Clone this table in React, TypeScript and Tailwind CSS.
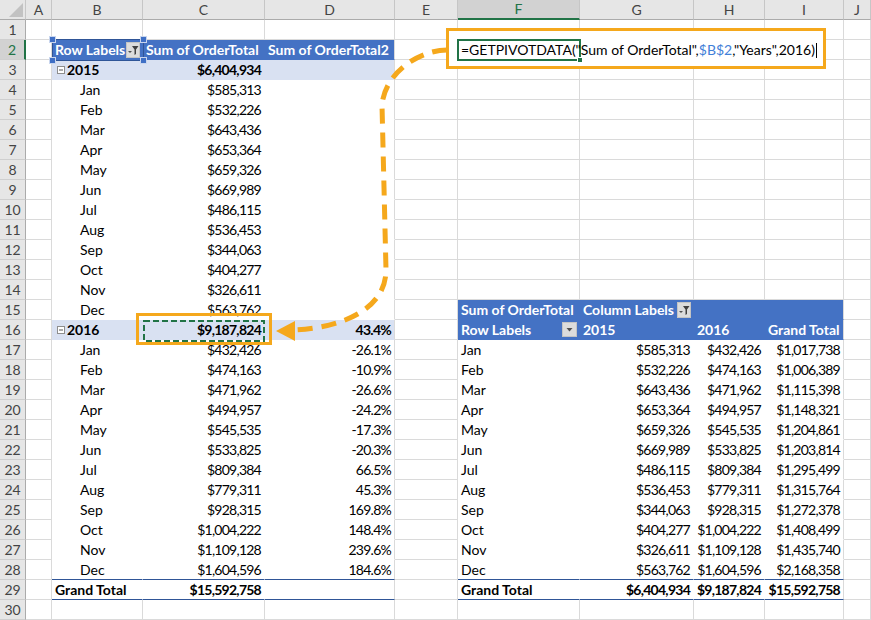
import React from "react";

const W = ["w-[26px]", "w-[26px]", "w-[91px]", "w-[122px]", "w-[130px]", "w-[63px]", "w-[122px]", "w-[114px]", "w-[71px]", "w-[79px]", "w-[27px]"];
const LET = ["", "A", "B", "C", "D", "E", "F", "G", "H", "I", "J"];
const MONTHS = ["Jan", "Feb", "Mar", "Apr", "May", "Jun", "Jul", "Aug", "Sep", "Oct", "Nov", "Dec"];
const V15 = ["$585,313", "$532,226", "$643,436", "$653,364", "$659,326", "$669,989", "$486,115", "$536,453", "$344,063", "$404,277", "$326,611", "$563,762"];
const V16 = ["$432,426", "$474,163", "$471,962", "$494,957", "$545,535", "$533,825", "$809,384", "$779,311", "$928,315", "$1,004,222", "$1,109,128", "$1,604,596"];
const PCT = ["-26.1%", "-10.9%", "-26.6%", "-24.2%", "-17.3%", "-20.3%", "66.5%", "45.3%", "169.8%", "148.4%", "239.6%", "184.6%"];
const TOT = ["$1,017,738", "$1,006,389", "$1,115,398", "$1,148,321", "$1,204,861", "$1,203,814", "$1,295,499", "$1,315,764", "$1,272,378", "$1,408,499", "$1,435,740", "$2,168,358"];

const GRID = "border-r-[#dadada] border-b-[#dadada]";
const BLUE = "bg-[#4472c4] text-white font-bold";
const BAND = "bg-[#d9e1f2]";

type Spec = { c?: React.ReactNode; a?: "l" | "r"; k: string };

function FilterBtn() {
  return (
    <span className="ml-auto mr-[2px] w-[14px] h-[16px] bg-[#dcdcdc] border border-[#c4c4c4] flex items-center justify-center">
      <svg width="12" height="14" viewBox="0 0 12 14">
        <polygon points="1,8 5,8 3,10" fill="#505050" />
        <polygon points="5,3 11.5,3 9,6.5 9,11 7.5,12 7.5,6.5" fill="#404040" />
      </svg>
    </span>
  );
}

function DropBtn() {
  return (
    <span className="ml-auto mr-[2px] w-[15px] h-[15px] bg-[#dcdcdc] border border-[#c4c4c4] flex items-center justify-center">
      <svg width="9" height="9" viewBox="0 0 9 9">
        <polygon points="1.5,3 7.5,3 4.5,6.5" fill="#505050" />
      </svg>
    </span>
  );
}

function Collapse({ label }: { label: string }) {
  return (
    <span className="flex items-center gap-[2px] font-bold">
      <svg width="8" height="8" viewBox="0 0 8 8" className="mt-[1px]">
        <rect x="0.5" y="0.5" width="7" height="7" fill="#ffffff" stroke="#8e8e8e" />
        <line x1="2" y1="4" x2="6" y2="4" stroke="#555555" />
      </svg>
      <span>{label}</span>
    </span>
  );
}

function Handle() {
  return <span className="w-[7px] h-[7px] bg-[#3f6fc5] border border-[#c9d6ee]" />;
}

function spec(r: number, c: number): Spec {
  // Left pivot: B..D (2..4), rows 2..29
  if (c >= 2 && c <= 4 && r >= 2 && r <= 29) {
    const rightB = c === 4 ? "border-r-[#dadada]" : "border-r-transparent";
    const bottom = r === 28 || r === 29 ? "border-b-[#2f5597]" : "border-b-transparent";
    const base = `${rightB} ${bottom}`;
    if (r === 2) {
      if (c === 2) return { c: <span className="flex items-center w-full">Row Labels<FilterBtn /></span>, k: `${base} ${BLUE}` };
      if (c === 3) return { c: "Sum of OrderTotal", k: `${base} ${BLUE}` };
      return { c: "Sum of OrderTotal2", k: `${base} ${BLUE}` };
    }
    if (r === 3 || r === 16) {
      const yr = r === 3 ? "2015" : "2016";
      if (c === 2) return { c: <Collapse label={yr} />, k: `${base} ${BAND} pl-[5px]` };
      if (c === 3) return { c: r === 3 ? "$6,404,934" : "$9,187,824", a: "r", k: `${base} ${BAND} font-bold` };
      return { c: r === 3 ? "" : "43.4%", a: "r", k: `${base} ${BAND} font-bold` };
    }
    if (r === 29) {
      if (c === 2) return { c: "Grand Total", k: `${base} font-bold` };
      if (c === 3) return { c: "$15,592,758", a: "r", k: `${base} font-bold` };
      return { k: base };
    }
    const i = r <= 15 ? r - 4 : r - 17;
    if (c === 2) return { c: MONTHS[i], k: `${base} pl-[28px]` };
    if (c === 3) return { c: r <= 15 ? V15[i] : V16[i], a: "r", k: base };
    return { c: r <= 15 ? "" : PCT[i], a: "r", k: base };
  }
  // Right pivot: F..I (6..9), rows 15..29
  if (c >= 6 && c <= 9 && r >= 15 && r <= 29) {
    const rightB = c === 9 ? "border-r-[#dadada]" : "border-r-transparent";
    const bottom = r === 28 || r === 29 ? "border-b-[#2f5597]" : "border-b-transparent";
    const base = `${rightB} ${bottom}`;
    if (r === 15) {
      if (c === 6) return { c: "Sum of OrderTotal", k: `${base} ${BLUE}` };
      if (c === 7) return { c: <span className="flex items-center w-full">Column Labels<FilterBtn /></span>, k: `${base} ${BLUE}` };
      return { k: `${base} ${BLUE}` };
    }
    if (r === 16) {
      if (c === 6) return { c: <span className="flex items-center w-full">Row Labels<DropBtn /></span>, k: `${base} ${BLUE}` };
      if (c === 7) return { c: "2015", k: `${base} ${BLUE}` };
      if (c === 8) return { c: "2016", k: `${base} ${BLUE}` };
      return { c: "Grand Total", k: `${base} ${BLUE}` };
    }
    if (r === 29) {
      const vals = ["Grand Total", "$6,404,934", "$9,187,824", "$15,592,758"];
      return { c: vals[c - 6], a: c === 6 ? "l" : "r", k: `${base} font-bold` };
    }
    const i = r - 17;
    const vals = [MONTHS[i], V15[i], V16[i], TOT[i]];
    return { c: vals[c - 6], a: c === 6 ? "l" : "r", k: base };
  }
  return { k: GRID };
}

function Corner() {
  return (
    <div className="w-[26px] h-[20px] shrink-0 bg-[#e6e6e6] border-r border-b border-r-[#c6c6c6] border-b-[#ababab] flex items-end justify-end pr-[2px] pb-[2px]">
      <svg width="14" height="14" viewBox="0 0 14 14">
        <polygon points="14,0 14,14 0,14" fill="#c2c2c2" />
      </svg>
    </div>
  );
}

export default function App() {
  const rows = Array.from({ length: 31 }, (_, r) => r);
  return (
    <div className="relative w-[871px] h-[620px] overflow-hidden bg-white font-['Lato',sans-serif] text-[14px] text-black leading-none">
      <div className="flex flex-col">
        {rows.map((r) => (
          <div key={r} className="flex h-[20px]">
            {r === 0 ? (
              <>
                <Corner />
                {LET.slice(1).map((l, idx) => {
                  const c = idx + 1;
                  const active = c === 6;
                  return (
                    <div
                      key={c}
                      className={`${W[c]} h-[20px] shrink-0 flex items-center justify-center border-r border-r-[#c6c6c6] ${
                        active ? "bg-[#d2d2d2] text-[#217346] border-b-2 border-b-[#217346]" : "bg-[#e6e6e6] text-[#444444] border-b border-b-[#ababab]"
                      }`}
                    >
                      {l}
                    </div>
                  );
                })}
              </>
            ) : (
              <>
                <div
                  className={`w-[26px] h-[20px] shrink-0 flex items-center justify-center border-b border-b-[#cfcfcf] ${
                    r === 2 ? "bg-[#d2d2d2] text-[#217346] border-r-2 border-r-[#217346]" : "bg-[#e6e6e6] text-[#444444] border-r border-r-[#ababab]"
                  }`}
                >
                  {r}
                </div>
                {LET.slice(1).map((_, idx) => {
                  const c = idx + 1;
                  const s = spec(r, c);
                  return (
                    <div
                      key={c}
                      className={`${W[c]} h-[20px] shrink-0 border-r border-b flex items-center whitespace-nowrap ${
                        s.a === "r" ? "justify-end pr-[3px] tracking-[-0.75px]" : "pl-[3px]"
                      } ${s.k}`}
                    >
                      {s.c}
                    </div>
                  );
                })}
              </>
            )}
          </div>
        ))}
      </div>

      {/* Selection frame with handles on B2 */}
      <div className="absolute left-[49px] top-[36px] w-[98px] h-[28px] pointer-events-none">
        <div className="absolute inset-[3px] border border-[#2f5597]" />
        <div className="relative h-full flex flex-col justify-between">
          <div className="flex justify-between">
            <Handle />
            <Handle />
          </div>
          <div className="flex justify-between">
            <Handle />
            <Handle />
          </div>
        </div>
      </div>

      {/* Formula callout */}
      <div className="absolute left-[446px] top-[28px] w-[380px] h-[41px] border-[3px] border-[#f5a81c] bg-white pl-[8px] pt-[8px]">
        <div className="relative w-[124px] h-[22px] border-2 border-[#217346]">
          <span className="absolute right-[-4px] bottom-[-4px] w-[6px] h-[6px] bg-[#217346] border border-white" />
          <div className="absolute left-[2px] top-[-1px] h-[20px] flex items-center whitespace-nowrap">
            <span>=GETPIVOTDATA("Sum of OrderTotal",</span>
            <span className="text-[#3f80d8]">$B$2</span>
            <span>,"Years",2016)</span>
            <span className="ml-[1px] w-[1px] h-[15px] bg-black" />
          </div>
        </div>
      </div>

      {/* C16 highlight */}
      <div className="absolute left-[136px] top-[313px] w-[136px] h-[32px] border-[3px] border-[#f5a81c]" />
      <svg className="absolute left-0 top-0 pointer-events-none" width="871" height="620">
        <rect x="144" y="321" width="120" height="20" fill="none" stroke="#217346" strokeWidth="2" strokeDasharray="6 3" />
        <path
          d="M 447 50 C 420 50, 385 72, 382 105 L 386 270 C 386 310, 340 328, 294 330"
          fill="none"
          stroke="#f5a81c"
          strokeWidth="5"
          strokeDasharray="15 9"
        />
        <polygon points="276,331 295,321 295,341" fill="#f5a81c" />
      </svg>
    </div>
  );
}
